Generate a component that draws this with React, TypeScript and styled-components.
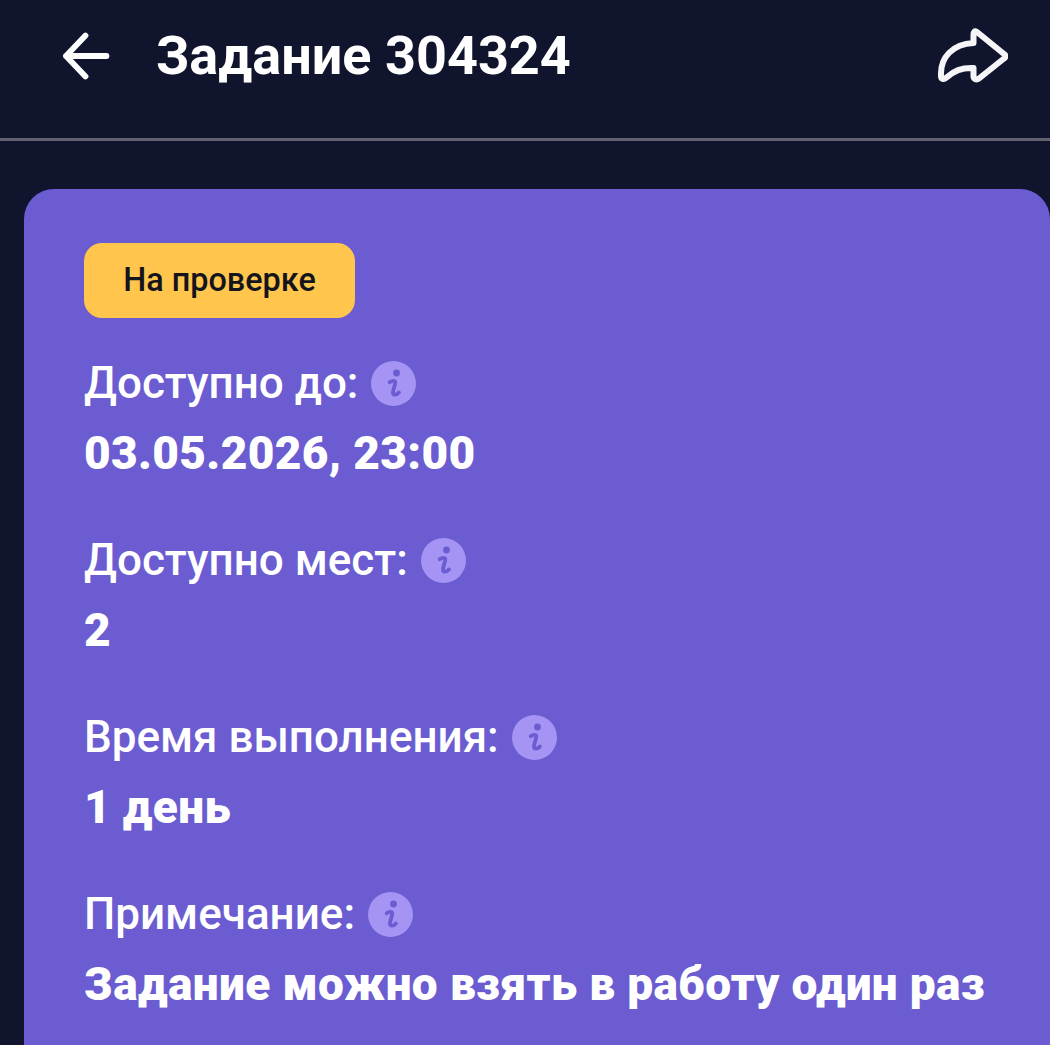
import { createGlobalStyle } from 'styled-components';
import styled from 'styled-components';

const GlobalStyle = createGlobalStyle`
    html, body {
        margin: 0;
        height: 100%;
        overflow: hidden;
        background-color: #10142d;
        font-family: Roboto, "Liberation Sans", sans-serif;
    }
`;

const Page = styled.div`
    width: 1050px;
    height: 1045px;
    overflow: hidden;
    background-color: #10142d;
`;

const Header = styled.header`
    height: 138px;
    box-sizing: content-box;
    display: flex;
    align-items: flex-start;
    padding: 0 42px 0 60px;
    border-bottom: 3px solid #62626f;
`;

const BackButton = styled.div`
    width: 52px;
    height: 52px;
    margin-top: 29px;
    margin-right: 44px;
    flex: none;
`;

const Title = styled.h1`
    flex: 1;
    margin: 24px 0 0;
    font-size: 54px;
    line-height: 64px;
    font-weight: 700;
    color: #fff;
`;

const ShareButton = styled.div`
    width: 72px;
    height: 60px;
    margin-top: 27px;
    flex: none;
`;

const Card = styled.main`
    margin: 48px 0 0 24px;
    padding: 54px 60px 0;
    min-height: 900px;
    background-color: #6b5cd1;
    border-radius: 30px 30px 0 0;
`;

const Badge = styled.div`
    width: 271px;
    height: 75px;
    display: flex;
    align-items: center;
    justify-content: center;
    padding-bottom: 1px;
    box-sizing: border-box;
    background-color: #ffc54d;
    border-radius: 18px;
    font-size: 32.4px;
    font-weight: 500;
    color: #14141c;
`;

const Field = styled.section`
    margin-top: 40px;
    height: 137px;
`;

const LabelRow = styled.div`
    display: flex;
    align-items: center;
    gap: 13px;
    height: 50px;
`;

const Label = styled.span`
    font-size: 44px;
    line-height: 50px;
    font-weight: 500;
    color: #fff;
`;

const InfoBadge = styled.span`
    width: 45px;
    height: 45px;
    flex: none;
    display: block;
`;

const Value = styled.div`
    margin-top: 18px;
    font-size: 46px;
    line-height: 54px;
    font-weight: 900;
    letter-spacing: 0.36px;
    color: #fff;
`;

const InfoIcon = () => (
    <InfoBadge>
        <svg width="45" height="45" viewBox="0 0 45 45">
            <circle cx="22.5" cy="22.5" r="22.5" fill="#a594f3" />
            <circle cx="25.5" cy="12" r="3.400" fill="#6b5cd1" />
            <path
                d="M18.700 21.200c1.700-1 3.800-1.500 4.900-1 .8.400.8 1.300.5 2.500l-2 7.600c-.5 2 .2 3.400 1.800 3.400 1.500 0 2.900-.9 4-2.200"
                fill="none"
                stroke="#6b5cd1"
                strokeWidth="3.800"
                strokeLinecap="round"
                strokeLinejoin="round"
            />
        </svg>
    </InfoBadge>
);

const fields = [
    { label: 'Доступно до:', value: '03.05.2026, 23:00' },
    { label: 'Доступно мест:', value: '2' },
    { label: 'Время выполнения:', value: '1 день' },
    { label: 'Примечание:', value: 'Задание можно взять в работу один раз' },
];

const App = () => {
    return (
        <Page>
            <GlobalStyle />
            <Header>
                <BackButton>
                    <svg width="52" height="52" viewBox="0 0 52 52" fill="none">
                        <path
                            d="M25.500 6.500 L6 27 L25.500 47.500 M6 27 H46.500"
                            stroke="#fff"
                            strokeWidth="5.800"
                            strokeLinecap="round"
                            strokeLinejoin="round"
                        />
                    </svg>
                </BackButton>
                <Title>Задание 304324</Title>
                <ShareButton>
                    <svg width="72" height="60" viewBox="0 0 72 60" fill="none">
                        <path
                            d="M41 5 L68 27 C70 28.500 70 30 68 31.500 L43 51.500 C40 53.500 37.500 52 37.500 49 V41 C25 40.500 18 44 10.500 50.500 C7.500 53 5 52 5 49 C4 30 17 17 37.500 16 V8 C37.500 4.500 38.500 3.500 41 5 Z"
                            stroke="#f5f5f7"
                            strokeWidth="6"
                            strokeLinejoin="round"
                        />
                    </svg>
                </ShareButton>
            </Header>
            <Card>
                <Badge>На проверке</Badge>
                {fields.map((field) => (
                    <Field key={field.label}>
                        <LabelRow>
                            <Label>{field.label}</Label>
                            <InfoIcon />
                        </LabelRow>
                        <Value>{field.value}</Value>
                    </Field>
                ))}
            </Card>
        </Page>
    );
};

export default App;
